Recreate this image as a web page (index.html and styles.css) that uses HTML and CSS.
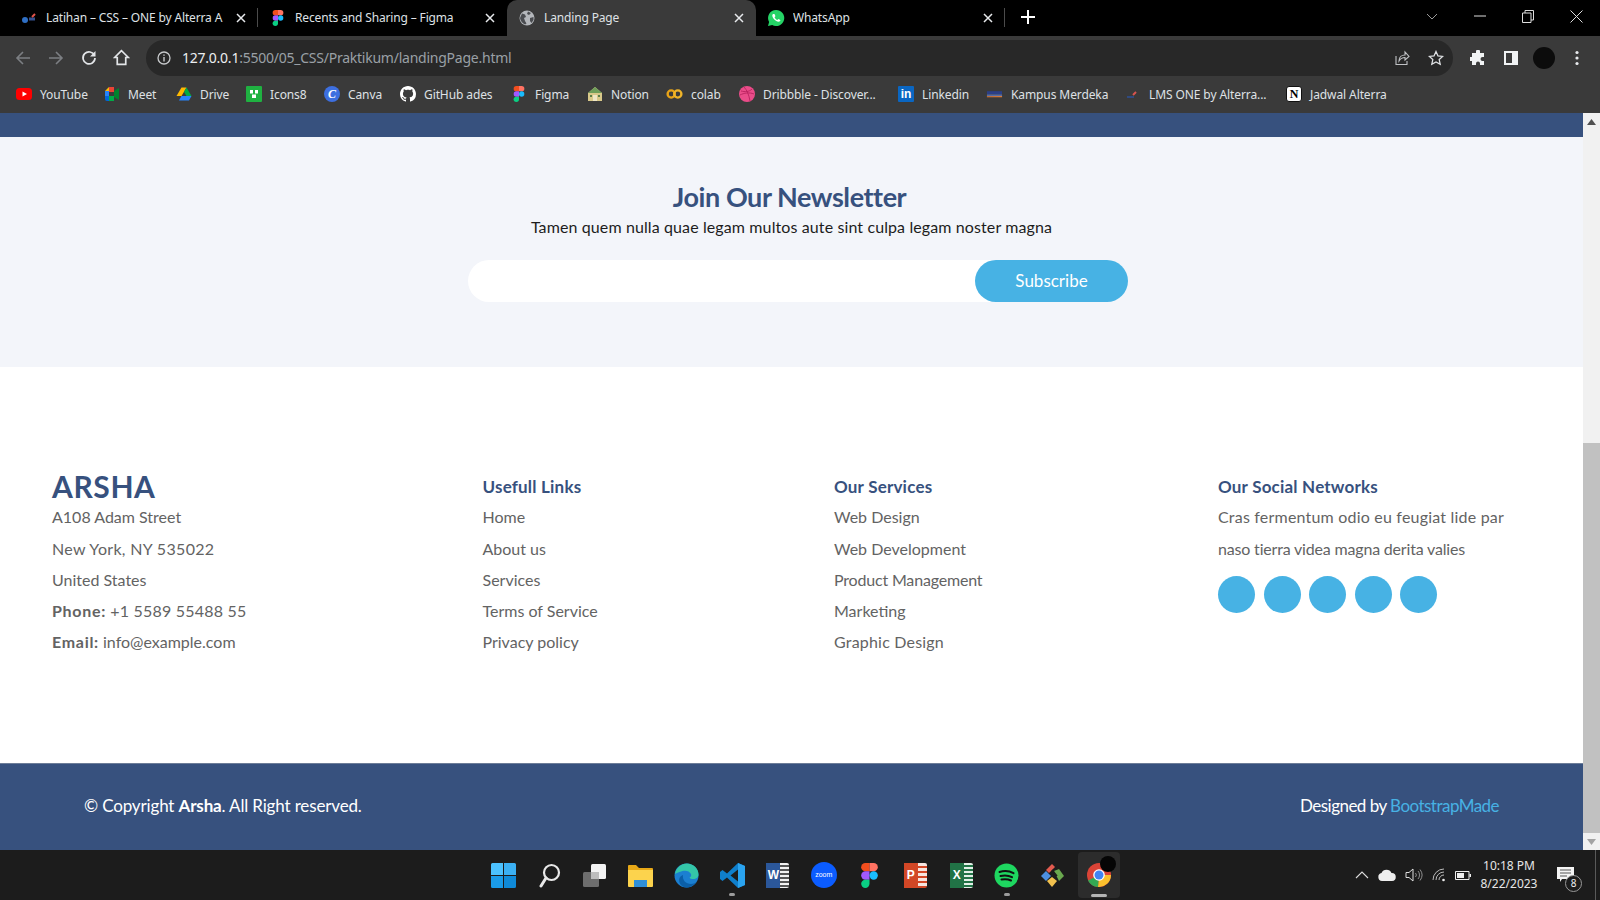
FILE: index.html
```html
<!DOCTYPE html>
<html lang="en">
<head>
<meta charset="utf-8">
<title>Landing Page</title>
<link rel="stylesheet" href="styles.css">
</head>
<body>
<svg class="defs" aria-hidden="true">
  <symbol id="figma" viewBox="0 0 12 18">
    <path fill="#f24e1e" d="M3 0h3v6H3a3 3 0 0 1 0-6z"/>
    <path fill="#ff7262" d="M6 0h3a3 3 0 0 1 0 6H6z"/>
    <path fill="#a259ff" d="M3 6h3v6H3a3 3 0 0 1 0-6z"/>
    <circle fill="#1abcfe" cx="9" cy="9" r="3"/>
    <path fill="#0acf83" d="M3 12h3v3a3 3 0 1 1-3-3z"/>
  </symbol>
  <symbol id="close" viewBox="0 0 10 10">
    <path d="M1 1l8 8M9 1l-8 8" stroke="#e8eaed" stroke-width="1.5" fill="none"/>
  </symbol>
</svg>

<header class="chrome">
  <div class="tabstrip">
    <div class="tab sep">
      <span class="fav"><svg viewBox="0 0 16 16" width="16" height="16"><path d="M1 10a3 3 0 0 1 6 0 3 3 0 0 1-6 0z" fill="#2f6fc4"/><path d="M8 9h6" stroke="#35508f" stroke-width="3"/><path d="M11 7l3-3" stroke="#e2534a" stroke-width="2"/></svg></span>
      <span class="tab-title">Latihan – CSS – ONE by Alterra A</span>
      <svg class="x"><use href="#close"/></svg>
    </div>
    <div class="tab">
      <span class="fav"><svg width="16" height="16"><use href="#figma"/></svg></span>
      <span class="tab-title">Recents and Sharing – Figma</span>
      <svg class="x"><use href="#close"/></svg>
    </div>
    <div class="tab active">
      <span class="fav"><svg viewBox="0 0 16 16" width="16" height="16"><circle cx="8" cy="8" r="7.5" fill="#b4b7bb"/><path d="M3 3.500l3 1 1 2.500-2 1 1 3 1.500 2.500-1.500 1C3 13 1.500 11 1 8zM9 1.500l3 1.500-2 2-2-1zM11 8l3.500-1v3l-2 3-1.500-2z" fill="#4a4c50"/></svg></span>
      <span class="tab-title">Landing Page</span>
      <svg class="x"><use href="#close"/></svg>
    </div>
    <div class="tab sep">
      <span class="fav"><svg viewBox="0 0 18 18" width="18" height="18"><path d="M9 1a8 8 0 0 0-6.900 12L1 17l4.200-1.100A8 8 0 1 0 9 1z" fill="#25d366"/><path d="M6.300 5c-.4 0-1 .5-1 1.600 0 2.500 3.300 6 6.200 6.200 1.200 0 1.900-.8 1.900-1.500 0-.3-1.700-1.200-2-1.200-.3 0-.7.900-1 .9-.8 0-2.700-1.800-2.800-2.700 0-.3.800-.7.800-1.100 0-.3-.7-2.200-1.100-2.200z" fill="#fff"/></svg></span>
      <span class="tab-title">WhatsApp</span>
      <svg class="x"><use href="#close"/></svg>
    </div>
    <div class="newtab"><svg viewBox="0 0 14 14" width="14" height="14"><path d="M7 0v14M0 7h14" stroke="#fff" stroke-width="2"/></svg></div>
    <div class="winctl">
      <span class="wc wc-chev"><svg viewBox="0 0 12 7" width="12" height="7"><path d="M1 1l5 5 5-5" stroke="#9a9a9a" fill="none"/></svg></span>
      <span class="wc"><svg viewBox="0 0 12 2" width="12" height="2"><path d="M0 1h12" stroke="#ddd"/></svg></span>
      <span class="wc"><svg viewBox="0 0 12 13" width="12" height="13"><path d="M.5 3h8.500v9.500H.5zM3 3V.5h8.500V10H9" stroke="#ddd" fill="none"/></svg></span>
      <span class="wc"><svg viewBox="0 0 13 13" width="13" height="13"><path d="M.5.500l12 12M12.500.500l-12 12" stroke="#ddd" fill="none"/></svg></span>
    </div>
  </div>

  <div class="toolbar">
    <span class="tb"><svg viewBox="0 0 16 16" width="16" height="16"><path d="M15 8H2M8 2L2 8l6 6" stroke="#7c7f83" stroke-width="1.600" fill="none"/></svg></span>
    <span class="tb"><svg viewBox="0 0 16 16" width="16" height="16"><path d="M1 8h13M8 2l6 6-6 6" stroke="#7c7f83" stroke-width="1.600" fill="none"/></svg></span>
    <span class="tb"><svg viewBox="0 0 16 16" width="16" height="16"><path d="M13.500 5.500A6 6 0 1 0 14 8" stroke="#e3e5e8" stroke-width="1.700" fill="none"/><path d="M14.500 1v5.500H9z" fill="#e3e5e8"/></svg></span>
    <span class="tb"><svg viewBox="0 0 16 16" width="17" height="17"><path d="M8 1.500L1.500 8H4v6.500h8V8h2.500z" stroke="#e3e5e8" stroke-width="1.600" fill="none"/></svg></span>
    <div class="omnibox">
      <svg class="info" viewBox="0 0 14 14" width="14" height="14"><circle cx="7" cy="7" r="6" stroke="#c8cacc" stroke-width="1.300" fill="none"/><path d="M7 6v4.500M7 3.500v1.300" stroke="#c8cacc" stroke-width="1.400"/></svg>
      <span class="url"><b>127.0.0.1</b>:5500/05_CSS/Praktikum/landingPage.html</span>
      <span class="om-ic"><svg viewBox="0 0 16 16" width="16" height="16"><path d="M2 6v8.500h11V11" stroke="#c0c2c5" stroke-width="1.100" fill="none"/><path d="M5 11c0-4 3-6 6-6V2l4 4.500L11 10V7.500C8.500 7.500 6.500 8.500 5 11z" stroke="#c0c2c5" stroke-width="1.100" fill="none"/></svg></span>
      <span class="om-ic"><svg viewBox="0 0 16 16" width="16" height="16"><path d="M8 1.500l2 4.400 4.700.5-3.500 3.200 1 4.700L8 11.900l-4.200 2.400 1-4.700L1.300 6.400 6 5.900z" stroke="#dfe1e4" stroke-width="1.300" fill="none"/></svg></span>
    </div>
    <span class="tb first-ext"><svg viewBox="0 0 16 16" width="16" height="16"><path d="M6 1.500a2 2 0 0 1 4 0V3h4v4h-1.500a2 2 0 0 0 0 4H14v4h-4v-1.500a2 2 0 0 0-4 0V15H2v-4H.5a2 2 0 0 1 0-4H2V3h4z" fill="#f1f3f4"/></svg></span>
    <span class="tb"><svg viewBox="0 0 16 16" width="16" height="16"><path fill-rule="evenodd" d="M1 1h14v14H1zM3 3v10h6V3z" fill="#f1f3f4"/></svg></span>
    <span class="tb"><span class="avatar"></span></span>
    <span class="tb"><svg viewBox="0 0 4 16" width="4" height="16"><circle cx="2" cy="2.500" r="1.600" fill="#e8eaed"/><circle cx="2" cy="8" r="1.600" fill="#e8eaed"/><circle cx="2" cy="13.500" r="1.600" fill="#e8eaed"/></svg></span>
  </div>

  <div class="bookmarks">
    <a class="bm"><svg viewBox="0 0 16 16" width="16" height="16"><rect y="2" width="16" height="12" rx="3.500" fill="#f00"/><path d="M6.500 5.500v5L11 8z" fill="#fff"/></svg>YouTube</a>
    <a class="bm"><svg viewBox="0 0 16 16" width="16" height="16"><path d="M1 5l4-4h5v5H5v4H1z" fill="#fbbc04"/><path d="M1 5h4v5H1z" fill="#2684fc"/><path d="M1 10h4v5H3a2 2 0 0 1-2-2z" fill="#0066da"/><path d="M5 10h5v5H5z" fill="#00ac47"/><path d="M10 5v6l5 3V2z" fill="#00832d"/><path d="M5 1h5v5H5z" fill="#ea4335"/></svg>Meet</a>
    <a class="bm"><svg viewBox="0 0 16 16" width="16" height="16"><path d="M5.500 1.500h5L5.500 10H.5z" fill="#ffba00"/><path d="M10.500 1.500L15.500 10h-5L8 5.800z" fill="#00ac47"/><path d="M5.500 10h10l-2.500 4.500H3z" fill="#2684fc"/></svg>Drive</a>
    <a class="bm"><svg viewBox="0 0 16 16" width="16" height="16"><rect width="16" height="16" rx="1" fill="#1fb141"/><path d="M4 4h3v3.500H4zM9 4h3v3.500H9zM6 8.500h4V12H6z" fill="#fff"/></svg>Icons8</a>
    <a class="bm"><span class="canva">C</span>Canva</a>
    <a class="bm"><svg viewBox="0 0 16 16" width="16" height="16"><path fill="#fff" d="M8 0C3.580 0 0 3.580 0 8c0 3.540 2.290 6.530 5.470 7.590.4.070.55-.17.55-.38 0-.19-.01-.82-.01-1.490-2.010.37-2.530-.49-2.690-.94-.09-.23-.48-.94-.82-1.130-.28-.15-.68-.52-.01-.53.63-.01 1.080.58 1.230.82.720 1.210 1.870.87 2.330.66.070-.52.280-.87.510-1.070-1.780-.2-3.640-.89-3.640-3.950 0-.87.310-1.590.820-2.150-.08-.2-.36-1.020.08-2.120 0 0 .670-.21 2.200.82.640-.18 1.320-.27 2-.27.680 0 1.360.09 2 .27 1.530-1.040 2.200-.82 2.200-.82.440 1.100.160 1.920.080 2.120.510.560.820 1.270.820 2.150 0 3.070-1.870 3.750-3.650 3.950.290.250.540.730.540 1.480 0 1.070-.01 1.930-.01 2.200 0 .21.150.460.550.380A8.013 8.013 0 0 0 16 8c0-4.420-3.580-8-8-8z"/></svg>GitHub ades</a>
    <a class="bm"><svg width="16" height="16"><use href="#figma"/></svg>Figma</a>
    <a class="bm"><svg viewBox="0 0 16 16" width="16" height="16"><path d="M8 1L1 7v8h14V7z" fill="#d9c98a"/><path d="M8 1L1 7h14z" fill="#6f9e5a"/><path d="M6 9h4v6H6z" fill="#efe7c6"/><path d="M3 9h2v2H3zM11 9h2v2h-2z" fill="#5a7f4a"/></svg>Notion</a>
    <a class="bm"><svg viewBox="0 0 18 16" width="17" height="16"><circle cx="5.500" cy="8" r="3.800" stroke="#e8a317" stroke-width="2.500" fill="none"/><circle cx="12.500" cy="8" r="3.800" stroke="#f0b429" stroke-width="2.500" fill="none"/></svg>colab</a>
    <a class="bm"><svg viewBox="0 0 16 16" width="16" height="16"><circle cx="8" cy="8" r="8" fill="#ea4c89"/><path d="M2 5c4 1 8 1 11-2M5 1c3 3 5 8 6 14M1 9c4-2 9-3 14-1" stroke="#b8215e" stroke-width=".9" fill="none"/></svg>Dribbble - Discover...</a>
    <a class="bm"><span class="li">in</span>Linkedin</a>
    <a class="bm"><svg viewBox="0 0 18 16" width="17" height="16"><path d="M1 5h16v3H1z" fill="#2b3f87"/><path d="M1 8.500h16v1.500H1z" fill="#5a74b8"/><path d="M1 10.500l16-.5v1.500H1z" fill="#d97b3a"/></svg>Kampus Merdeka</a>
    <a class="bm"><svg viewBox="0 0 16 16" width="16" height="16"><path d="M2 11h7" stroke="#2f4a80" stroke-width="2"/><path d="M8 9l3-3" stroke="#d9534f" stroke-width="2"/></svg>LMS ONE by Alterra...</a>
    <a class="bm"><span class="notion">N</span>Jadwal Alterra</a>
  </div>
</header>

<div class="viewport">
  <main class="page">
    <div class="band"></div>
    <section class="newsletter">
      <h2>Join Our Newsletter</h2>
      <p>Tamen quem nulla quae legam multos aute sint culpa legam noster magna</p>
      <form class="signup">
        <input class="signup-input" type="email" aria-label="Email">
        <button class="signup-btn" type="button">Subscribe</button>
      </form>
    </section>
    <section class="footer-main">
      <div>
        <h3 class="brand">ARSHA</h3>
        <p>A108 Adam Street</p>
        <p class="wide">New York, NY 535022</p>
        <p>United States</p>
        <p class="num"><strong>Phone:</strong> +1 5589 55488 55</p>
        <p><strong>Email:</strong> info@example.com</p>
      </div>
      <div>
        <h4>Usefull Links</h4>
        <p>Home</p>
        <p>About us</p>
        <p>Services</p>
        <p>Terms of Service</p>
        <p>Privacy policy</p>
      </div>
      <div>
        <h4>Our Services</h4>
        <p>Web Design</p>
        <p>Web Development</p>
        <p class="narrow">Product Management</p>
        <p>Marketing</p>
        <p class="num">Graphic Design</p>
      </div>
      <div>
        <h4>Our Social Networks</h4>
        <p class="num">Cras fermentum odio eu feugiat lide par</p>
        <p class="narrow">naso tierra videa magna derita valies</p>
        <div class="socials"><span></span><span></span><span></span><span></span><span></span></div>
      </div>
    </section>
    <footer class="footer-bottom">
      <span class="copy">© Copyright <strong>Arsha</strong>. All Right reserved.</span>
      <span class="designed">Designed by <a class="credit">BootstrapMade</a></span>
    </footer>
  </main>
  <aside class="scrollbar">
    <span class="sb-btn"><svg viewBox="0 0 9 6" width="9" height="6"><path d="M4.500 0L9 6H0z" fill="#505050"/></svg></span>
    <span class="sb-track"><span class="sb-thumb"></span></span>
    <span class="sb-btn"><svg viewBox="0 0 9 6" width="9" height="6"><path d="M4.500 6L9 0H0z" fill="#a3a3a3"/></svg></span>
  </aside>
</div>

<footer class="taskbar">
  <div></div>
  <div class="apps">
    <span class="app"><svg viewBox="0 0 25 25" width="25" height="25"><path d="M0 1.500A1.500 1.500 0 0 1 1.500 0H12v12H0z" fill="#4cc2ff"/><path d="M13 0h10.500A1.500 1.500 0 0 1 25 1.500V12H13z" fill="#3bb0f3"/><path d="M0 13h12v12H1.500A1.500 1.500 0 0 1 0 23.500z" fill="#1a9be8"/><path d="M13 13h12v10.500a1.500 1.500 0 0 1-1.500 1.500H13z" fill="#0f8ad8"/></svg></span>
    <span class="app"><svg viewBox="0 0 25 25" width="25" height="25"><circle cx="14.500" cy="9.500" r="7.500" stroke="#e8e8e8" stroke-width="2.200" fill="#1c1c1c"/><path d="M9 15l-5 8" stroke="#e8e8e8" stroke-width="3" stroke-linecap="round"/></svg></span>
    <span class="app"><svg viewBox="0 0 25 25" width="25" height="25"><rect x="9" y="1" width="15" height="15" rx="1.500" fill="#f3f3f3"/><rect x="1" y="9" width="16" height="15" rx="1.500" fill="#6d6d6d"/><rect x="9" y="9" width="8" height="7" fill="#bdbdbd"/></svg></span>
    <span class="app"><svg viewBox="0 0 25 25" width="25" height="25"><path d="M0 3a1 1 0 0 1 1-1h7l3 3h13a1 1 0 0 1 1 1v4H0z" fill="#e8a917"/><path d="M0 7h25v16a1 1 0 0 1-1 1H1a1 1 0 0 1-1-1z" fill="#fcd34d"/><path d="M6 17h13v7H6z" fill="#2f8fd8"/></svg></span>
    <span class="app"><svg viewBox="0 0 25 25" width="25" height="25"><circle cx="12.500" cy="12.500" r="12" fill="#1b7fd1"/><path d="M1 11C2 5 7 .5 13 .5c6.500 0 11.500 5 11.500 11 0 3-2.500 4.500-5 4.500-2 0-3.500-.5-4-1.500 1.500-.5 2-2 1.500-3.500C15.500 8 12 7 8.500 8 5.500 8.800 2.500 10 1 11z" fill="#34c6a8"/><path d="M9 12c-1 5 3 9 8 9 2 0 4-1 5-2-2.500 4-6 5.500-9.500 5.500C7 24.500 4 19 5.500 15c.6-1.500 2-2.500 3.500-3z" fill="#0b5fa8"/></svg></span>
    <span class="app dot"><svg viewBox="0 0 25 25" width="25" height="25"><path d="M18 0l7 3v19l-7 3-11-10.500-4.500 3.500L0 16V9l2.500-2L7 10.500z" fill="#0f7fcc"/><path d="M18 0l7 3v19l-7 3z" fill="#2aa3ef"/><path d="M18 6.500v12l-7.500-6z" fill="#1c1c1c"/></svg></span>
    <span class="app"><span class="office word"><i>W</i></span></span>
    <span class="app"><span class="zoomapp">zoom</span></span>
    <span class="app"><svg width="17" height="25"><use href="#figma"/></svg></span>
    <span class="app"><span class="office ppt"><i>P</i></span></span>
    <span class="app"><span class="office xls"><i>X</i></span></span>
    <span class="app dot"><svg viewBox="0 0 25 25" width="25" height="25"><circle cx="12.500" cy="12.500" r="12" fill="#1ed760"/><path d="M5.500 9c5-1.500 10-1 14 1.200M6.500 13c4-1 8-.7 11.500 1.200M7.500 16.500c3.500-.7 6.500-.5 9.500 1" stroke="#111" stroke-width="2" stroke-linecap="round" fill="none"/></svg></span>
    <span class="app"><svg viewBox="0 0 25 25" width="25" height="25"><path d="M6 7l6-6 3 3-6 6z" fill="#e25b4f"/><path d="M1 13l5-5 5 5-5 5z" fill="#4d8fe0"/><path d="M14 8l5-2 5 7-5 5z" fill="#6aa84f"/><path d="M7 18l5-4 5 4-5 6z" fill="#f2c14e"/><path d="M12 7l5 6" stroke="#1c1c1c" stroke-width="1.500"/></svg></span>
    <span class="app active-app"><svg viewBox="0 0 26 26" width="26" height="26"><circle cx="13" cy="13" r="12" fill="#db4437"/><path d="M13 13h12a12 12 0 0 1-13 12z" fill="#fbc02d"/><path d="M13 13l-1 12A12 12 0 0 1 2 18.500z" fill="#34a853"/><circle cx="13" cy="13" r="5.800" fill="#fff"/><circle cx="13" cy="13" r="4.500" fill="#4285f4"/></svg><span class="chrome-badge"></span></span>
  </div>
  <div class="tray">
    <svg class="tray-chev" viewBox="0 0 14 8" width="14" height="8"><path d="M1 7l6-6 6 6" stroke="#ddd" stroke-width="1.100" fill="none"/></svg>
    <svg viewBox="0 0 18 12" width="18" height="12"><path d="M4 12a4 4 0 0 1-.5-7.900A5.500 5.500 0 0 1 13.500 4 4 4 0 0 1 14 12z" fill="#eee"/></svg>
    <svg viewBox="0 0 18 14" width="18" height="14"><path d="M1 4.500h3L8 1v12L4 9.500H1z" stroke="#ddd" fill="none"/><path d="M10.500 5a3 3 0 0 1 0 4M13 3a6 6 0 0 1 0 8M15 1.500a9 9 0 0 1 0 11" stroke="#8f8f8f" fill="none"/></svg>
    <svg viewBox="0 0 14 14" width="14" height="14"><path d="M1 12a11 11 0 0 1 11-11M4 12a8 8 0 0 1 8-8M7 12a5 5 0 0 1 5-5" stroke="#bbb" fill="none"/><circle cx="11.500" cy="12" r="1.300" fill="#eee"/></svg>
    <svg viewBox="0 0 16 9" width="16" height="9"><path d="M.5.500h13.500v8H.5z" stroke="#eee" fill="none"/><path d="M2 2h7v5H2z" fill="#eee"/><path d="M14.500 3H16v3h-1.500z" fill="#eee"/></svg>
    <div class="clock"><span>10:18 PM</span><span>8/22/2023</span></div>
    <span class="notif"><svg viewBox="0 0 17 15" width="17" height="15"><path d="M0 0h17v12H5l-2 3v-3H0z" fill="#f4f4f4"/><path d="M3 3h11M3 6h11M3 9h7" stroke="#555" stroke-width="1"/></svg><span class="notif-count">8</span></span>
    <span class="desk-line"></span>
  </div>
</footer>
</body>
</html>
```

FILE: styles.css
```css
* { box-sizing: border-box; }
html, body { margin: 0; height: 100%; }
body {
  display: flex;
  flex-direction: column;
  height: 900px;
  overflow: hidden;
  font-family: "Noto Sans", "Open Sans", sans-serif;
  background: #fff;
}
.defs { display: none; }

/* Browser chrome */
.chrome { background: #3a3a3a; color: #e8eaed; }
.tabstrip {
  display: flex;
  height: 36px;
  padding-left: 9px;
  background: #000;
}
.tab {
  position: relative;
  width: 249px;
  display: flex;
  align-items: center;
  padding: 0 12px 1px 11px;
  font-size: 12px;
  color: #dfe1e5;
}
.tab.active { background: #3a3a3a; border-radius: 10px 10px 0 0; }
.tab.sep::after {
  content: "";
  position: absolute;
  right: 0;
  top: 8px;
  height: 19px;
  width: 1px;
  background: #4b4b4b;
}
.fav {
  width: 18px;
  height: 18px;
  flex: none;
  display: flex;
  align-items: center;
  justify-content: center;
}
.tab-title {
  flex: 1;
  margin-left: 8px;
  margin-right: 9px;
  overflow: hidden;
  white-space: nowrap;
  letter-spacing: -.15px;
}
.x { width: 10px; height: 10px; flex: none; }
.newtab {
  width: 46px;
  display: flex;
  align-items: center;
  justify-content: center;
  padding-bottom: 2px;
}
.winctl { margin-left: auto; display: flex; }
.wc {
  width: 48px;
  display: flex;
  align-items: center;
  justify-content: center;
  padding-bottom: 4px;
}
.wc-chev { width: 32px; margin-right: 8px; }

.toolbar {
  height: 40px;
  display: flex;
  align-items: center;
  padding: 4px 7px 0 6px;
}
.tb {
  width: 33px;
  height: 36px;
  flex: none;
  display: flex;
  align-items: center;
  justify-content: center;
  padding-bottom: 1px;
}
.first-ext { margin-left: 8px; }
.avatar { width: 22px; height: 22px; border-radius: 50%; background: #0c0c0c; }
.omnibox {
  flex: 1;
  height: 36px;
  margin-left: 8px;
  display: flex;
  align-items: center;
  background: #282828;
  border-radius: 18px;
  padding: 0 0 0 11px;
}
.info { flex: none; }
.url {
  flex: 1;
  margin-left: 11px;
  padding-bottom: 2px;
  font-size: 14px;
  letter-spacing: -.24px;
  color: #9aa0a6;
  white-space: nowrap;
}
.url b { font-weight: 400; color: #eceef0; }
.om-ic {
  width: 34px;
  display: flex;
  justify-content: center;
}

.bookmarks {
  height: 37px;
  display: grid;
  grid-template-columns: 88px 72px 70px 78px 76px 111px 76px 79px 73px 159px 88px 139px 161px auto;
  align-items: center;
  padding: 0 0 1px 16px;
  font-size: 12px;
  color: #dfe1e5;
  letter-spacing: -.1px;
}
.bm { display: flex; align-items: center; gap: 8px; white-space: nowrap; }
.canva {
  width: 16px; height: 16px; border-radius: 50%;
  background: #3d6fe0;
  color: #fff;
  font: italic 700 12px/16px "Liberation Serif", serif;
  text-align: center;
}
.li {
  width: 16px; height: 16px; border-radius: 1px;
  background: #0a66c2;
  color: #fff;
  font: 700 12px/16px "Liberation Sans", sans-serif;
  text-align: center;
  letter-spacing: 0;
}
.notion {
  width: 16px; height: 16px; border-radius: 3px;
  background: #fff;
  color: #000;
  border: 1px solid #111;
  font: 700 12px/14px "Liberation Serif", serif;
  text-align: center;
  letter-spacing: 0;
}

/* Page */
.viewport { flex: 1; display: flex; min-height: 0; }
.page {
  flex: 1;
  display: flex;
  flex-direction: column;
  min-width: 0;
  font-family: Lato, "Liberation Sans", sans-serif;
}
.band { height: 24px; background: #37517e; }
.newsletter {
  height: 230px;
  background: #f3f5fa;
  padding-top: 43px;
  text-align: center;
}
.newsletter h2 {
  margin: 0;
  padding-right: 4px;
  font-size: 27px;
  line-height: 34px;
  font-weight: 700;
  letter-spacing: -.43px;
  color: #37517e;
}
.newsletter p {
  margin: 1px 0 0;
  font-size: 16px;
  line-height: 24px;
  letter-spacing: .11px;
  color: #1d1d1d;
}
.signup {
  display: flex;
  width: 660px;
  height: 42px;
  margin: 21px 0 0 468px;
  background: #fff;
  border-radius: 21px;
}
.signup-input {
  flex: 1;
  min-width: 0;
  border: 0;
  background: transparent;
  outline: 0;
}
.signup-btn {
  width: 153px;
  border: 0;
  border-radius: 21px;
  padding: 0 0 2px;
  background: #47b2e4;
  color: #fff;
  font: 400 17px Lato, "Liberation Sans", sans-serif;
}

.footer-main {
  height: 396px;
  padding: 104px 0 0 52px;
  display: grid;
  grid-template-columns: 430.5px 351.5px 384px 1fr;
  align-content: start;
  background: #fff;
  color: #636363;
  font-size: 16px;
  line-height: 31.25px;
}
.footer-main p { margin: -1px 0 1px; white-space: nowrap; }
.footer-main strong { font-weight: 700; letter-spacing: .7px; }
.footer-main h4 {
  margin: 0;
  font-size: 17px;
  font-weight: 700;
  letter-spacing: .2px;
  color: #37517e;
}
.brand {
  margin: 0;
  font-size: 30px;
  font-weight: 700;
  letter-spacing: .6px;
  color: #37517e;
}
.footer-main .wide { letter-spacing: .32px; }
.footer-main .num { letter-spacing: .2px; }
.footer-main .narrow { letter-spacing: -.18px; }
.socials { display: flex; gap: 8.500px; margin-top: 12px; }
.socials span {
  width: 37px;
  height: 37px;
  border-radius: 50%;
  background: #47b2e4;
}

.footer-bottom {
  height: 87px;
  display: flex;
  align-items: center;
  justify-content: space-between;
  padding: 0 84px 3px;
  background: #37517e;
  border-top: 1px solid #6d7d98;
  color: #fff;
  font-size: 17px;
}
.copy { letter-spacing: -.15px; }
.designed { letter-spacing: -.53px; }
.footer-bottom strong { font-weight: 700; }
.credit { color: #47b2e4; }

.scrollbar {
  width: 17px;
  flex: none;
  display: flex;
  flex-direction: column;
  background: #f1f1f1;
}
.sb-btn {
  height: 17px;
  flex: none;
  display: flex;
  align-items: center;
  justify-content: center;
}
.sb-track { flex: 1; display: flex; flex-direction: column; justify-content: flex-end; }
.sb-thumb { height: 390px; background: #c1c1c1; }

/* Taskbar */
.taskbar {
  height: 50px;
  flex: none;
  display: grid;
  grid-template-columns: 1fr auto 1fr;
  background: #1c1c1c;
  color: #e6e6e6;
}
.apps { display: flex; align-items: center; }
.app {
  position: relative;
  width: 45.800px;
  height: 46px;
  display: flex;
  align-items: center;
  justify-content: center;
}
.app.dot::after {
  content: "";
  position: absolute;
  left: 20px;
  bottom: 2px;
  width: 6px;
  height: 3px;
  border-radius: 2px;
  background: #9c9c9c;
}
.active-app { background: #2c2c2c; border-radius: 4px; width: 42px; margin-left: 2px; }
.active-app::after {
  content: "";
  position: absolute;
  left: 13px;
  bottom: 1px;
  width: 16px;
  height: 3px;
  border-radius: 2px;
  background: #b5b5b5;
}
.chrome-badge {
  position: absolute;
  top: 4px;
  right: 4px;
  width: 16px;
  height: 16px;
  border-radius: 50%;
  background: #050505;
}
.office {
  position: relative;
  width: 23px;
  height: 25px;
  border-radius: 2px;
  background: repeating-linear-gradient(#f1f1f1 0 2px, #555 2px 4px);
}
.office i {
  position: absolute;
  left: 0;
  top: 0;
  width: 14px;
  height: 25px;
  font: 700 12px/25px "Liberation Sans", sans-serif;
  color: #fff;
  text-align: center;
}
.word i { background: #2b579a; }
.ppt { background: repeating-linear-gradient(#f7e5df 0 3px, #d24726 3px 5px); }
.ppt i { background: #d24726; }
.xls { background: repeating-linear-gradient(#e2efe7 0 2px, #217346 2px 4px); }
.xls i { background: #217346; }
.zoomapp {
  width: 26px;
  height: 26px;
  border-radius: 50%;
  background: #0b5cff;
  color: #fff;
  font: 400 7px/26px "Liberation Sans", sans-serif;
  text-align: center;
}
.tray {
  display: flex;
  align-items: center;
  justify-content: flex-end;
  font-size: 12px;
}
.tray > svg { margin-right: 9px; flex: none; }
.clock {
  width: 58px;
  margin-right: 7px;
  display: flex;
  flex-direction: column;
  align-items: center;
  line-height: 18px;
  font-family: "Noto Sans", sans-serif;
  white-space: nowrap;
}
.notif { position: relative; margin: 4px 0 0 12px; width: 26px; height: 20px; }
.notif-count {
  position: absolute;
  left: 8px;
  top: 8px;
  width: 17px;
  height: 17px;
  border-radius: 50%;
  background: #1c1c1c;
  border: 1px solid #9a9a9a;
  color: #eee;
  font-size: 10px;
  line-height: 15px;
  text-align: center;
}
.desk-line { width: 1px; height: 50px; margin: 0 4px 0 12px; background: #5a5a5a; }
```
